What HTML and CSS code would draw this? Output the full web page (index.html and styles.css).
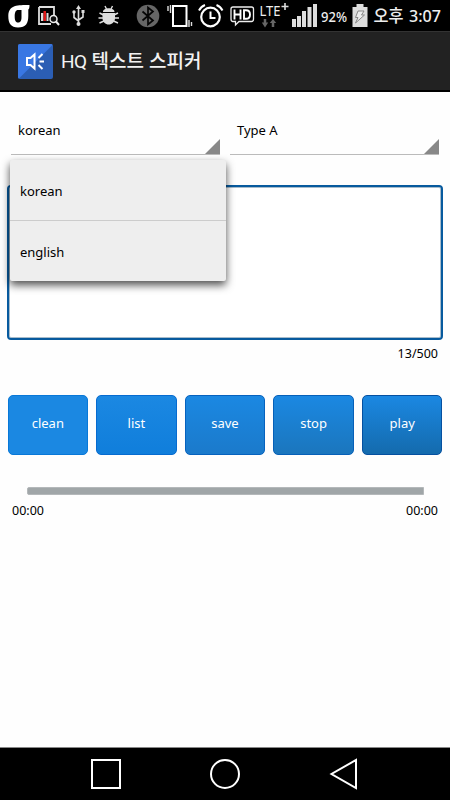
FILE: index.html
```
<!DOCTYPE html>
<html lang="ko">
<head>
  <meta charset="UTF-8">
  <meta name="viewport" content="width=device-width,initial-scale=1">
  <title>HQ 텍스트 스피커</title>
  <link rel="stylesheet" href="styles.css">
</head>
<body>
  <!-- status bar -->
  <div class="status-bar">
    <svg width="34" height="31" viewBox="0 0 34 31"><path d="M29.500 5C22 5.500 8.300 3 8.300 16C8.300 23.500 11 27.500 18 27.500C26 27.500 28.300 23 28.300 16V9.500Q29.500 9 29.500 5ZM18 10H21.500V17C21.500 21 20.500 22.500 18 22.500C15.500 22.500 14.700 20 14.700 16.500C14.700 12 16 10 18 10Z" fill="#fff" fill-rule="evenodd"/></svg>
    <svg width="32" height="31" viewBox="34 0 32 31"><path d="M39 7H54V15M39 7V24H51" fill="none" stroke="#ddd" stroke-width="1.800"/><path d="M41 13H43.500V21H41ZM46.500 13H48.500V21H46.500Z" fill="#ddd"/><path d="M43.500 11H46V21H43.500Z" fill="#e01818"/><circle cx="53.500" cy="19" r="3.500" fill="#111" stroke="#eee" stroke-width="1.500"/><path d="M56 21.500L59 25" stroke="#eee" stroke-width="2"/></svg>
    <svg width="27" height="31" viewBox="66 0 27 31"><g fill="none" stroke="#ddd" stroke-width="1.600"><path d="M78.500 8V24M78.500 21L74 17.500V12M78.500 20L83 17V12"/></g><path d="M78.500 5L81 9H76ZM81.500 10H84.500V13H81.500Z" fill="#ddd"/><circle cx="74" cy="12" r="1.700" fill="#ddd"/><circle cx="78.500" cy="24" r="2" fill="#ddd"/></svg>
    <svg width="37" height="31" viewBox="93 0 37 31"><path d="M103 12C103 7 114.500 7 114.500 12ZM102.500 13H115V18C115 22 112 24.500 108.700 24.500C105.500 24.500 102.500 22 102.500 18Z" fill="#ddd"/><path d="M105 6L106.500 9M112.500 6L111 9M103.500 15L99.500 13M103.500 18H98.500M104 21L99.500 23M114 15L118 13M114 18H119M113.500 21L118 23" stroke="#ddd" stroke-width="1.400"/></svg>
    <svg width="33" height="31" viewBox="130 0 33 31"><circle cx="148" cy="16" r="11.300" fill="#666"/><path d="M142.500 11.500L153 20.500L148 24.500V7.500L153 11.500L142.500 20.500" fill="none" stroke="#050505" stroke-width="1.700"/></svg>
    <svg width="30" height="31" viewBox="163 0 30 31"><rect x="173" y="6" width="13.500" height="20" fill="none" stroke="#fff" stroke-width="2"/><path d="M168 6V11M170.500 5V13M189 20V27M191.500 22V26" stroke="#ddd" stroke-width="1.400"/></svg>
    <svg width="34" height="31" viewBox="193 0 34 31"><circle cx="210.500" cy="17" r="9.300" fill="none" stroke="#fff" stroke-width="2.200"/><path d="M210.500 11.500V18H215.500M199 10.500Q201 6.500 205 5M222.500 10.500Q220.500 6.500 216.500 5" fill="none" stroke="#fff" stroke-width="2"/></svg>
    <svg width="31" height="31" viewBox="227 0 31 31"><path d="M233 7H251.500Q253.500 7 253.500 9V19Q253.500 21.500 251.500 21.500H239L235.500 25V21.500H233Q231 21.500 231 19V9Q231 7 233 7Z" fill="none" stroke="#eee" stroke-width="1.300"/><path d="M234.500 9.500V19.500M240.500 9.500V19.500M234.500 14.500H240.500M244 10.200H246Q250 10.200 250 14.500Q250 18.800 246 18.800H244Z" fill="none" stroke="#fff" stroke-width="1.900"/></svg>
    <svg class="lte" width="32" height="31" viewBox="258 0 32 31"><text x="259.500" y="15.500" textLength="21" lengthAdjust="spacingAndGlyphs">LTE</text><path d="M281.500 6.500H288.500M285 3V10" stroke="#ddd" stroke-width="1.600"/><path d="M265 19V23M273 27V22" stroke="#666" stroke-width="2.500"/><path d="M261.800 22.500H268.200L265 27.500ZM269.800 23H276.200L273 19Z" fill="#666"/></svg>
    <svg width="29" height="31" viewBox="290 0 29 31"><path d="M292 19H296V27H292ZM297 16H301V27H297ZM302 11H306V27H302ZM307.500 7H311.500V27H307.500ZM313 4H317V27H313Z" fill="#ddd"/></svg>
    <svg class="percent" width="32" height="31" viewBox="319 0 32 31"><text x="321" y="21.500" textLength="26" lengthAdjust="spacingAndGlyphs">92%</text></svg>
    <svg width="20" height="31" viewBox="351 0 20 31"><path d="M356.500 4H363.500V7H367.500V27H352.500V7H356.500Z" fill="#ddd"/><path d="M358 11H364L361.500 15H364.500L355.500 23L358 17.500H355.500Z" fill="#eee" stroke="#888"/></svg>
    <svg class="clock" width="79" height="31" viewBox="371 0 79 31"><text x="373.500" y="22" textLength="30" lengthAdjust="spacingAndGlyphs">오후</text><text x="409" y="22" textLength="32" lengthAdjust="spacingAndGlyphs">3:07</text></svg>
  </div>

  <!-- action bar -->
  <header class="action-bar">
    <svg class="app-icon" width="35" height="35" viewBox="0 0 35 35">
      <rect width="35" height="35" rx="2" fill="#2b5eb4"/>
      <path d="M2 0H33Q34 0 34.500 1L1 34.500Q0 34 0 33V2Q0 0 2 0Z" fill="#3977e3"/>
      <path d="M9 14H12.500L16.500 10.500V24.500L12.500 21H9Z" fill="none" stroke="#fff" stroke-width="2"/>
      <path d="M20.500 14L24.500 10M21.500 17.500H26M20.500 21L24.500 25" stroke="#fff" stroke-width="2"/>
    </svg>
    <h1 class="title"><span class="latin">HQ</span> 텍스트 스피커</h1>
  </header>

  <main class="content">
    <div class="spinners">
      <div class="spinner">
        korean
        <div class="dropdown">
          <div class="option">korean</div>
          <div class="option">english</div>
        </div>
      </div>
      <div class="spinner">Type A</div>
    </div>

    <div class="text-input"></div>
    <div class="count">13/500</div>

    <div class="buttons">
      <button class="btn clean">clean</button>
      <button class="btn list">list</button>
      <button class="btn save">save</button>
      <button class="btn stop">stop</button>
      <button class="btn play">play</button>
    </div>

    <div class="track"></div>
    <div class="times"><span>00:00</span><span>00:00</span></div>
  </main>

  <!-- navigation bar -->
  <nav class="nav-bar">
    <svg width="32" height="32" viewBox="0 0 32 32"><rect x="2" y="2" width="28" height="28"/></svg>
    <svg width="32" height="32" viewBox="0 0 32 32"><circle cx="16" cy="16" r="14"/></svg>
    <svg width="32" height="32" viewBox="0 0 32 32"><path d="M28 2V30L3.500 16Z"/></svg>
  </nav>
</body>
</html>
```
FILE: styles.css
```
* { margin: 0; padding: 0; box-sizing: border-box; }

body {
  display: flex;
  flex-direction: column;
  height: 800px;
  overflow: hidden;
  background: #fefefe;
  color: #000;
  font-family: "Noto Sans", "Noto Sans CJK KR", sans-serif;
  font-size: 13px;
}

svg { display: block; flex: none; }

/* ---- status bar ---- */
.status-bar { display: flex; height: 31px; background: #000; }
.status-bar text { fill: #eee; }
.lte { font-size: 14px; }
.percent { font-size: 14px; font-weight: 500; }
.clock { font-size: 17px; font-weight: 500; }

/* ---- action bar ---- */
.action-bar {
  display: flex;
  align-items: center;
  gap: 8px;
  height: 61px;
  padding: 0 18px;
  background: #222;
  border-top: 1px solid #333;
  border-bottom: 2px solid #000;
}
.title { color: #f2f2f2; font-size: 19px; font-weight: 500; line-height: 28px; white-space: nowrap; }
.title .latin { font-family: Roboto, sans-serif; font-weight: 400; letter-spacing: -0.5px; }

/* ---- content ---- */
.content { flex: 1; padding: 18px 7px 0; }

.spinners { display: flex; gap: 10px; padding: 0 4px; }
.spinner {
  position: relative;
  flex: 1;
  height: 45px;
  padding: 10px 7px;
  line-height: 20px;
  border-bottom: 1px solid #bbb;
}
.spinner::after {
  content: "";
  position: absolute;
  right: 0;
  bottom: 0;
  border-left: 15px solid transparent;
  border-bottom: 15px solid #888;
}

/* open list under the language spinner */
.dropdown {
  position: absolute;
  z-index: 1;
  top: 50px;
  left: -1px;
  width: 216px;
  background: #eee;
  border-radius: 2px;
  box-shadow: 0 4px 8px rgba(0,0,0,0.7);
}
.option { height: 60px; padding: 0 10px; line-height: 62px; }
.option + .option { height: 61px; border-top: 1px solid #ccc; }

.text-input {
  height: 155px;
  margin-top: 30px;
  background: #fff;
  border: 2px solid #075a9e;
  border-radius: 4px;
  box-shadow: inset 0 0 0 1px #a8bccb;
}
.count { padding: 5px 5px 0; line-height: 18px; font-size: 12.5px; text-align: right; }

.buttons { display: flex; gap: 8px; margin-top: 32px; padding: 0 0.5px; }
.btn {
  flex: 1;
  height: 60px;
  padding-bottom: 4px;
  border: 1px solid #0878d8;
  border-radius: 5px;
  color: #fff;
  font: inherit;
}
.clean { background: #1b88e2; }
.list { background: linear-gradient(#1b88e2, #107edb); border-color: #066bd0; }
.save { background: linear-gradient(#1b88e2, #1b7acb); border-color: #0662be; }
.stop { background: linear-gradient(#1b88e2, #1b76bd); border-color: #0660b8; }
.play { background: linear-gradient(#1b88e2, #146bad); border-color: #0550a0; }

.track { height: 8px; margin: 32px 19px 0 20px; background: #a0a6a8; border: 1px solid #b4b8ba; border-radius: 2px 0 0 2px; }
.times { display: flex; justify-content: space-between; padding: 6px 5px 0; line-height: 20px; font-size: 12.5px; }

/* ---- navigation bar ---- */
.nav-bar {
  display: flex;
  justify-content: center;
  gap: 87px;
  height: 53px;
  padding-top: 10px;
  background: #000;
  border-top: 1px solid #888;
}
.nav-bar svg { fill: none; stroke: #fff; stroke-width: 2; }
```
